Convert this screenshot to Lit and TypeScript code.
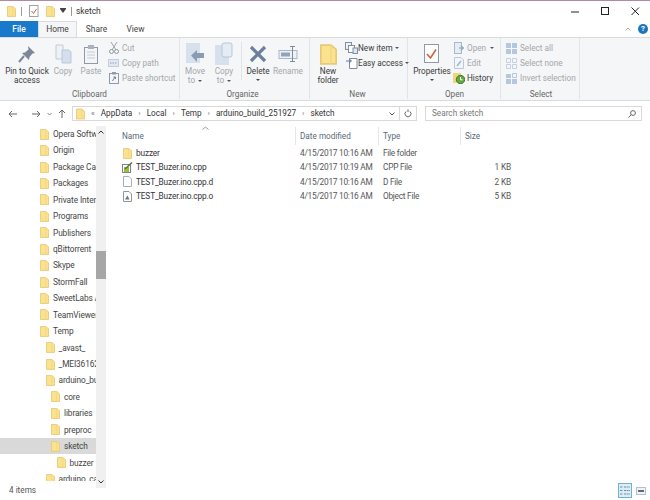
import { LitElement, html, css, svg } from "lit";
import { customElement } from "lit/decorators.js";

const folder = (w = 10, h = 12) => html`<svg width=${w} height=${h} viewBox="0 0 10 12">
  <path d="M0.5 0.5H6.5L9.5 3V11.5H0.5Z" fill="#fbe28f" stroke="#e8c976" stroke-width="1" />
  <path d="M6.5 0.5V11.5" stroke="#f4d780" stroke-width="1" />
</svg>`;

const icon = (w: number, h: number, body: unknown) =>
  html`<svg width=${w} height=${h} viewBox="0 0 ${w} ${h}">${body}</svg>`;

const I = {
  pin: icon(20, 20, svg`<path d="M11 2L18 9L15.5 9.5L12.5 13L12 16L5 9L8 8.5L11.5 5.5Z" fill="#7c8797"/><path d="M7 12L2 18" stroke="#7c8797" stroke-width="2"/>`),
  copy: icon(20, 20, svg`<path d="M3 1H10V15H3Z" fill="#eef2f7" stroke="#c2cad6"/><path d="M9 6H16L18 8V19H9Z" fill="#d4deec" stroke="#bcc7d6"/>`),
  paste: icon(18, 21, svg`<rect x="2.5" y="3.5" width="13" height="16" fill="#f4f5f6" stroke="#8d9aa9"/><rect x="6" y="1" width="6" height="4" fill="#aab3be"/><path d="M5 8H13M5 11H13M5 14H13" stroke="#c5ccd4"/>`),
  cut: icon(10, 12, svg`<path d="M2 0L7 8M8 0L3 8" stroke="#9aa3ae" stroke-width="1"/><circle cx="2.5" cy="9.5" r="2" fill="none" stroke="#8d97a3"/><circle cx="7.5" cy="9.5" r="2" fill="none" stroke="#8d97a3"/>`),
  copyPath: icon(11, 8, svg`<rect x=".5" y=".5" width="10" height="7" fill="#e1e8f2" stroke="#c2cedd"/><path d="M2 4H9" stroke="#8ea1b8" stroke-dasharray="1.5 1"/>`),
  pasteShort: icon(10, 12, svg`<rect x=".5" y="1.5" width="9" height="10" fill="#f4f5f6" stroke="#8d9aa9"/><rect x="3" y="0" width="4" height="2.5" fill="#8d9aa9"/><path d="M3.5 9L6 5M4.5 5H6.5V7" stroke="#6f7f92" fill="none"/>`),
  moveTo: icon(20, 24, svg`<rect x="1" y="1" width="14" height="20" fill="#d7e1ee"/><path d="M19 11V16H12V20L6 13.5L12 8V11Z" fill="#8a9cb1"/>`),
  copyTo: icon(20, 24, svg`<rect x="1" y="3" width="14" height="20" fill="#d7e1ee"/><rect x="8" y="1" width="10" height="14" rx="2" fill="#e6ecf4" stroke="#b9c6d6"/>`),
  del: icon(18, 18, svg`<path d="M2 2L16 16M16 2L2 16" stroke="#6d7f99" stroke-width="3.2"/>`),
  rename: icon(21, 18, svg`<rect x="1" y="5.5" width="18" height="8" fill="#eef2f7" stroke="#aab6c5"/><rect x="3" y="7.5" width="9" height="4" fill="#92a3b8"/><path d="M12 1.5H17M14.5 1.5V16.5M12 16.5H17" stroke="#7d8a99" fill="none"/>`),
  newItem: icon(13, 12, svg`<rect x=".5" y=".5" width="6" height="7" fill="#eef2f7" stroke="#7f8ea0"/><rect x="3.5" y="3.5" width="6" height="7" fill="#fff" stroke="#7f8ea0"/><rect x="8" y="6" width="4.5" height="5.5" fill="#dfe6ef" stroke="#7f8ea0"/>`),
  easy: icon(12, 12, svg`<path d="M3.5 1.5H11V11.5H3.5Z" fill="#fff" stroke="#7f8ea0"/><path d="M0 4H5M3 2L5.5 4L3 6" stroke="#5d7ea3" fill="none"/>`),
  props: icon(16, 20, svg`<rect x=".5" y=".5" width="14" height="18" fill="#fff" stroke="#8f9aa6"/><path d="M3 10L6.5 14L12 5.5" stroke="#d2633b" stroke-width="1.6" fill="none"/>`),
  open: icon(10, 12, svg`<rect x=".5" y=".5" width="7" height="11" fill="#e6ecf4" stroke="#a9b9cc"/><path d="M5 6H9.5M7 3.5L9.5 6L7 8.5" stroke="#7e96b2" fill="none"/>`),
  edit: icon(10, 12, svg`<path d="M.5.5H7L9.5 3V11.5H.5Z" fill="#f2f5f9" stroke="#b9c8da"/><path d="M3 9L7 4" stroke="#9db5d2" stroke-width="1.5"/>`),
  history: icon(12, 12, svg`<path d="M0 1H8V11H0Z" fill="#f4d47a"/><circle cx="7.5" cy="7.5" r="4.2" fill="#66a843" stroke="#3f7d2c"/><path d="M7.5 5V7.8H9.6" stroke="#fff" fill="none"/>`),
  selAll: icon(11, 11, svg`<path d="M0 0H5V5H0ZM6 0H11V5H6ZM0 6H5V11H0ZM6 6H11V11H6Z" fill="#b4c7dc"/>`),
  selNone: icon(11, 11, svg`<path d="M.5.5H4.5V4.5H.5ZM6.5.5H10.5V4.5H6.5ZM.5 6.5H4.5V10.5H.5ZM6.5 6.5H10.5V10.5H6.5Z" fill="none" stroke="#c4d0de"/>`),
  selInv: icon(11, 11, svg`<path d="M0 6H5V11H0ZM6 6H11V11H6ZM0 1H5V5H0Z" fill="#b4c7dc"/><path d="M6.5.5H10.5V4.5H6.5Z" fill="none" stroke="#b4c7dc"/>`),
  check: icon(10, 12, svg`<rect x=".5" y=".5" width="8.5" height="11" fill="#fff" stroke="#9ca3ab"/><path d="M2.5 6L4.5 8.5L7.5 4" stroke="#d2633b" fill="none"/>`),
  cppFile: icon(11, 11, svg`<rect x="0.5" y="2.5" width="8" height="8" fill="#fff" stroke="#7a8590"/><rect x="2" y="5" width="5" height="5" fill="#9bc13c"/><path d="M3 7L10 0.5" stroke="#5e6b3a" stroke-width="1.4"/>`),
  dFile: icon(9, 11, svg`<path d="M.5.5H6L8.5 3V10.5H.5Z" fill="#fff" stroke="#a8aeb5"/>`),
  oFile: icon(9, 11, svg`<path d="M.5.5H6L8.5 3V10.5H.5Z" fill="#fff" stroke="#8f969e"/><path d="M2 8.5L4.5 4.5L6.5 8.5Z" fill="#6c7580"/>`),
};

const tree: [string, number][] = [
  ["Opera Software", 0], ["Origin", 0], ["Package Cache", 0], ["Packages", 0], ["Private Internet", 0],
  ["Programs", 0], ["Publishers", 0], ["qBittorrent", 0], ["Skype", 0], ["StormFall", 0],
  ["SweetLabs App", 0], ["TeamViewer", 0], ["Temp", 0], ["_avast_", 1], ["_MEI361626", 1],
  ["arduino_build", 1], ["core", 2], ["libraries", 2], ["preproc", 2], ["sketch", 2], ["buzzer", 3],
  ["arduino_cache", 1],
];

const files = [
  { name: "buzzer", icon: folder(9, 11), date: "4/15/2017 10:16 AM", type: "File folder", size: "" },
  { name: "TEST_Buzer.ino.cpp", icon: I.cppFile, date: "4/15/2017 10:19 AM", type: "CPP File", size: "1 KB" },
  { name: "TEST_Buzer.ino.cpp.d", icon: I.dFile, date: "4/15/2017 10:16 AM", type: "D File", size: "2 KB" },
  { name: "TEST_Buzer.ino.cpp.o", icon: I.oFile, date: "4/15/2017 10:16 AM", type: "Object File", size: "5 KB" },
];

@customElement("app-root")
export class AppRoot extends LitElement {
  static styles = css`
    :host {
      display: flex;
      flex-direction: column;
      width: 650px;
      height: 500px;
      overflow: hidden;
      background: #fff;
      color: #3a3a3a;
      font: 8.2px/1 Roboto, sans-serif;
    }
    svg {
      display: block;
      flex-shrink: 0;
    }

    .title {
      height: 21px;
      border-top: 1px solid #b08aa0;
      box-sizing: border-box;
      display: flex;
      align-items: center;
      padding-left: 7px;
      font-size: 8.4px;
      color: #333;
    }
    .title .sep {
      width: 1px;
      height: 9px;
      background: #999;
      margin: 0 7px 0 5px;
    }
    .title .sep.last {
      margin-right: 4px;
    }
    .title .gap {
      width: 7px;
    }
    .title .drop {
      width: 0;
      height: 0;
      border: 3px solid transparent;
      border-top: 4px solid #444;
      border-bottom: 0;
      margin-left: 5px;
      box-shadow: 0 -1px 0 #444;
    }
    .win {
      margin-left: auto;
      display: flex;
      align-items: center;
      gap: 21px;
      padding-right: 10px;
    }

    .tabs {
      height: 16px;
      display: flex;
      align-items: stretch;
      font-size: 8.4px;
      color: #444;
    }
    .tab {
      display: flex;
      align-items: center;
      justify-content: center;
      width: 39px;
    }
    .tab.blue {
      width: 38px;
      background: #1979ca;
      color: #fff;
      font-weight: 500;
    }
    .tab.on {
      background: #f5f6f7;
      border: 1px solid #dadbdc;
      border-bottom: 0;
      box-sizing: border-box;
    }
    .tabs .right {
      margin-left: auto;
      display: flex;
      align-items: center;
      gap: 7px;
      padding-right: 2px;
    }
    .help {
      width: 10px;
      height: 10px;
      border-radius: 50%;
      background: #1a75bc;
      color: #fff;
      font-size: 8px;
      font-weight: 700;
      display: flex;
      align-items: center;
      justify-content: center;
    }

    .ribbon {
      height: 64px;
      box-sizing: border-box;
      background: #f5f6f7;
      border-top: 1px solid #dadbdc;
      border-bottom: 1px solid #dadbdc;
      display: flex;
    }
    .group {
      display: flex;
      flex-direction: column;
      box-sizing: border-box;
      border-right: 1px solid #e2e3e4;
      margin-bottom: 1px;
    }
    .g1 { width: 180px; padding-left: 5px; }
    .g2 { width: 130px; padding-left: 1px; }
    .g3 { width: 98px; padding-left: 3px; }
    .g4 { width: 93px; padding-left: 6px; }
    .g5 { width: 79px; padding-left: 2px; }
    .items {
      flex: 1;
      display: flex;
      align-items: flex-start;
      padding-top: 3px;
    }
    .label {
      height: 10px;
      line-height: 11px;
      text-align: center;
      color: #666;
      margin-left: -5px;
    }
    .g5 .label {
      margin-left: 0;
    }
    .lg {
      height: 46px;
      display: flex;
      flex-direction: column;
      align-items: center;
      text-align: center;
      line-height: 9px;
      white-space: nowrap;
      flex-shrink: 0;
    }
    .lg .pic {
      height: 26px;
      display: flex;
      align-items: center;
      justify-content: center;
    }
    .w28 { width: 28px; }
    .w30 { width: 30px; }
    .w36 { width: 36px; }
    .w44 { width: 44px; }
    .off { color: #a3a7ab; }
    .caret {
      display: block;
      width: 0;
      height: 0;
      margin: 3px auto 0;
      border: 2px solid transparent;
      border-top: 2px solid #444;
      border-bottom: 0;
    }
    .col {
      display: flex;
      flex-direction: column;
      gap: 3px;
      margin-left: 3px;
      padding-top: 1px;
    }
    .sm {
      height: 12px;
      display: flex;
      align-items: center;
      gap: 3px;
      white-space: nowrap;
    }
    .g3 .sm {
      gap: 1px;
    }
    .sm .ic {
      width: 11px;
      display: flex;
      justify-content: center;
    }
    .divider {
      width: 1px;
      height: 38px;
      background: #e2e3e4;
      margin: 1px 1px 0 2px;
      flex-shrink: 0;
    }
    .mini {
      display: inline-block;
      width: 0;
      height: 0;
      border: 2px solid transparent;
      border-top: 2px solid #555;
      border-bottom: 0;
      margin-left: 1px;
      vertical-align: middle;
    }

    .addr {
      height: 25px;
      box-sizing: border-box;
      display: flex;
      align-items: center;
      padding: 0 8px;
    }
    .navs {
      width: 64px;
      display: flex;
      align-items: center;
      gap: 6px;
      flex-shrink: 0;
    }
    .navs .skip {
      width: 3px;
    }
    .box {
      height: 15px;
      box-sizing: border-box;
      border: 1px solid #d9d9d9;
      display: flex;
      align-items: center;
    }
    .path {
      width: 345px;
      padding-left: 3px;
      gap: 6px;
      color: #333;
    }
    .path .arr {
      color: #777;
      font-size: 8px;
    }
    .path .end {
      margin-left: auto;
      display: flex;
      align-items: center;
      height: 100%;
      gap: 4px;
      padding-right: 4px;
    }
    .path .rule {
      width: 1px;
      height: 100%;
      background: #d9d9d9;
    }
    .search {
      width: 217px;
      margin-left: 8px;
      padding: 0 5px 0 6px;
      justify-content: space-between;
      color: #777;
    }

    .main {
      flex: 1;
      min-height: 0;
      display: flex;
    }
    .nav {
      width: 96px;
      overflow: hidden;
      flex-shrink: 0;
    }
    .row {
      height: 16.43px;
      display: flex;
      align-items: center;
      gap: 4px;
      white-space: nowrap;
      overflow: hidden;
      color: #444;
      font-size: 8.3px;
      letter-spacing: -0.1px;
    }
    .row.sel {
      background: #d9d9d9;
    }
    .bar {
      width: 10px;
      flex-shrink: 0;
      background: #f0f0f0;
      display: flex;
      flex-direction: column;
      align-items: center;
      height: 362px;
      position: relative;
      justify-content: space-between;
      padding: 4px 0;
      box-sizing: border-box;
    }
    .thumb {
      position: absolute;
      top: 125px;
      left: 0;
      width: 10px;
      height: 28px;
      background: #a6a6a6;
    }

    .list {
      flex: 1;
      position: relative;
      padding-left: 16px;
      min-width: 0;
    }
    .head,
    .item {
      display: grid;
      grid-template-columns: 174px 83px 82px 50px;
      align-items: center;
    }
    .head {
      height: 20px;
      color: #5a6a7a;
    }
    .head div {
      height: 18px;
      display: flex;
      align-items: center;
      padding-left: 4px;
      border-right: 1px solid #e5e5e5;
      box-sizing: border-box;
    }
    .head div:first-child {
      padding-left: 0;
    }
    .head div:last-child {
      border-right: 0;
    }
    .sort {
      position: absolute;
      left: 96px;
      top: 0;
    }
    .item {
      height: 14.4px;
      color: #555;
      white-space: nowrap;
      font-size: 8.3px;
      letter-spacing: -0.15px;
    }
    .item .n {
      display: flex;
      align-items: center;
      gap: 3px;
      color: #333;
    }
    .item .n span {
      width: 11px;
      display: flex;
      justify-content: center;
    }
    .item .d {
      padding-left: 4px;
      letter-spacing: -0.25px;
    }
    .item .s {
      text-align: right;
    }

    .status {
      height: 19px;
      display: flex;
      align-items: center;
      padding: 0 4px 0 9px;
      color: #555;
      justify-content: space-between;
    }
    .views {
      display: flex;
      align-items: center;
      gap: 4px;
    }
    .views .v {
      width: 14px;
      height: 15px;
      box-sizing: border-box;
      border: 1px solid #6cb4cf;
      background: #d9edf6;
      display: flex;
      align-items: center;
      justify-content: center;
    }
  `;

  private lg(label: unknown, pic: unknown, cls: string, off = false, caret = false) {
    return html`<div class="lg ${cls} ${off ? "off" : ""}">
      <div class="pic">${pic}</div>
      <div>${label}</div>
      ${caret ? html`<i class="caret"></i>` : ""}
    </div>`;
  }

  private sm(label: unknown, pic: unknown, off = false) {
    return html`<div class="sm ${off ? "off" : ""}"><span class="ic">${pic}</span>${label}</div>`;
  }

  private ribbon() {
    return html`<div class="ribbon">
      <div class="group g1">
        <div class="items">
          ${this.lg(html`Pin to Quick<br />access`, I.pin, "w44")}
          ${this.lg("Copy", I.copy, "w28", true)}
          ${this.lg("Paste", I.paste, "w28", true)}
          <div class="col">
            ${this.sm("Cut", I.cut, true)}
            ${this.sm("Copy path", I.copyPath, true)}
            ${this.sm("Paste shortcut", I.pasteShort, true)}
          </div>
        </div>
        <div class="label">Clipboard</div>
      </div>
      <div class="group g2">
        <div class="items">
          ${this.lg(html`Move<br />to <i class="mini"></i>`, I.moveTo, "w28", true)}
          ${this.lg(html`Copy<br />to <i class="mini"></i>`, I.copyTo, "w30", true)}
          <div class="divider"></div>
          ${this.lg("Delete", I.del, "w30", false, true)}
          ${this.lg("Rename", I.rename, "w30", true)}
        </div>
        <div class="label">Organize</div>
      </div>
      <div class="group g3">
        <div class="items">
          ${this.lg(html`New<br />folder`, folder(17, 21), "w30")}
          <div class="col">
            ${this.sm(html`New item <i class="mini"></i>`, I.newItem)}
            ${this.sm(html`Easy access <i class="mini"></i>`, I.easy)}
          </div>
        </div>
        <div class="label">New</div>
      </div>
      <div class="group g4">
        <div class="items">
          ${this.lg("Properties", I.props, "w36", false, true)}
          <div class="col">
            ${this.sm(html`Open <i class="mini"></i>`, I.open, true)}
            ${this.sm("Edit", I.edit, true)}
            ${this.sm("History", I.history)}
          </div>
        </div>
        <div class="label">Open</div>
      </div>
      <div class="group g5">
        <div class="items">
          <div class="col">
            ${this.sm("Select all", I.selAll, true)}
            ${this.sm("Select none", I.selNone, true)}
            ${this.sm("Invert selection", I.selInv, true)}
          </div>
        </div>
        <div class="label">Select</div>
      </div>
    </div>`;
  }

  render() {
    const crumbs = ["AppData", "Local", "Temp", "arduino_build_251927", "sketch"];
    return html`
      <div class="title">
        ${folder(9, 11)}
        <span class="sep"></span>
        ${I.check}
        <span class="gap"></span>
        ${folder(9, 11)}
        <i class="drop"></i>
        <span class="sep last"></span>
        sketch
        <div class="win">
          ${icon(9, 9, svg`<path d="M0 5H8" stroke="#222"/>`)}
          ${icon(9, 9, svg`<rect x=".5" y=".5" width="7" height="7" fill="none" stroke="#222"/>`)}
          ${icon(9, 9, svg`<path d="M.5.5L8 8M8 .5L.5 8" stroke="#222"/>`)}
        </div>
      </div>
      <div class="tabs">
        <div class="tab blue">File</div>
        <div class="tab on">Home</div>
        <div class="tab">Share</div>
        <div class="tab">View</div>
        <div class="right">
          ${icon(6, 4, svg`<path d="M.5 3.5L3 1L5.5 3.5" stroke="#aaa" fill="none"/>`)}
          <div class="help">?</div>
        </div>
      </div>
      ${this.ribbon()}
      <div class="addr">
        <div class="navs">
          ${icon(9, 8, svg`<path d="M9 4H1M4 1L1 4L4 7" stroke="#666" fill="none"/>`)}
          <span class="skip"></span>
          ${icon(9, 8, svg`<path d="M0 4H8M5 1L8 4L5 7" stroke="#666" fill="none"/>`)}
          ${icon(5, 4, svg`<path d="M.5 1L2.5 3L4.5 1" stroke="#888" fill="none"/>`)}
          ${icon(8, 9, svg`<path d="M4 9V1M1 4L4 1L7 4" stroke="#666" fill="none"/>`)}
        </div>
        <div class="box path">
          ${folder(9, 12)}
          <span class="arr">«</span>
          ${crumbs.map((c, i) => html`${i ? html`<span class="arr">›</span>` : ""}<span>${c}</span>`)}
          <div class="end">
            ${icon(6, 4, svg`<path d="M.5 .5L3 3L5.5 .5" stroke="#555" fill="none"/>`)}
            <span class="rule"></span>
            ${icon(8, 9, svg`<path d="M2 2.5A3 3 0 1 0 6 2.5M4 .5V3" stroke="#666" fill="none"/>`)}
          </div>
        </div>
        <div class="box search">
          Search sketch
          ${icon(8, 8, svg`<circle cx="5" cy="3" r="2.4" fill="none" stroke="#666"/><path d="M3 5L.5 7.5" stroke="#666"/>`)}
        </div>
      </div>
      <div class="main">
        <div class="nav">
          ${tree.map(
            ([name, lvl]) => html`<div
              class="row ${name === "sketch" ? "sel" : ""}"
              style="padding-left:${40 + lvl * 5.5}px"
            >
              ${folder(9, 11)}${name}
            </div>`
          )}
        </div>
        <div class="bar">
          ${icon(6, 4, svg`<path d="M.5 3.5L3 1L5.5 3.5" stroke="#333" fill="none"/>`)}
          <div class="thumb"></div>
          ${icon(6, 4, svg`<path d="M.5 .5L3 3L5.5 .5" stroke="#333" fill="none"/>`)}
        </div>
        <div class="list">
          <div class="sort">${icon(7, 4, svg`<path d="M.5 3.5L3.5 1L6.5 3.5" stroke="#999" fill="none"/>`)}</div>
          <div class="head">
            <div>Name</div>
            <div>Date modified</div>
            <div>Type</div>
            <div>Size</div>
          </div>
          ${files.map(
            (f) => html`<div class="item">
              <div class="n"><span>${f.icon}</span>${f.name}</div>
              <div class="d">${f.date}</div>
              <div class="d">${f.type}</div>
              <div class="s">${f.size}</div>
            </div>`
          )}
        </div>
      </div>
      <div class="status">
        4 items
        <div class="views">
          <div class="v">
            ${icon(10, 9, svg`<path d="M0 1H3M0 4.5H3M0 8H3M4 1H10M4 4.5H10M4 8H10" stroke="#7d8b99" stroke-dasharray="2 .6"/>`)}
          </div>
          ${icon(10, 8, svg`<rect x=".5" y=".5" width="9" height="7" fill="#eef2f7" stroke="#b5c0cc"/><path d="M2 4H8" stroke="#445" stroke-width="1.6"/>`)}
        </div>
      </div>
    `;
  }
}
